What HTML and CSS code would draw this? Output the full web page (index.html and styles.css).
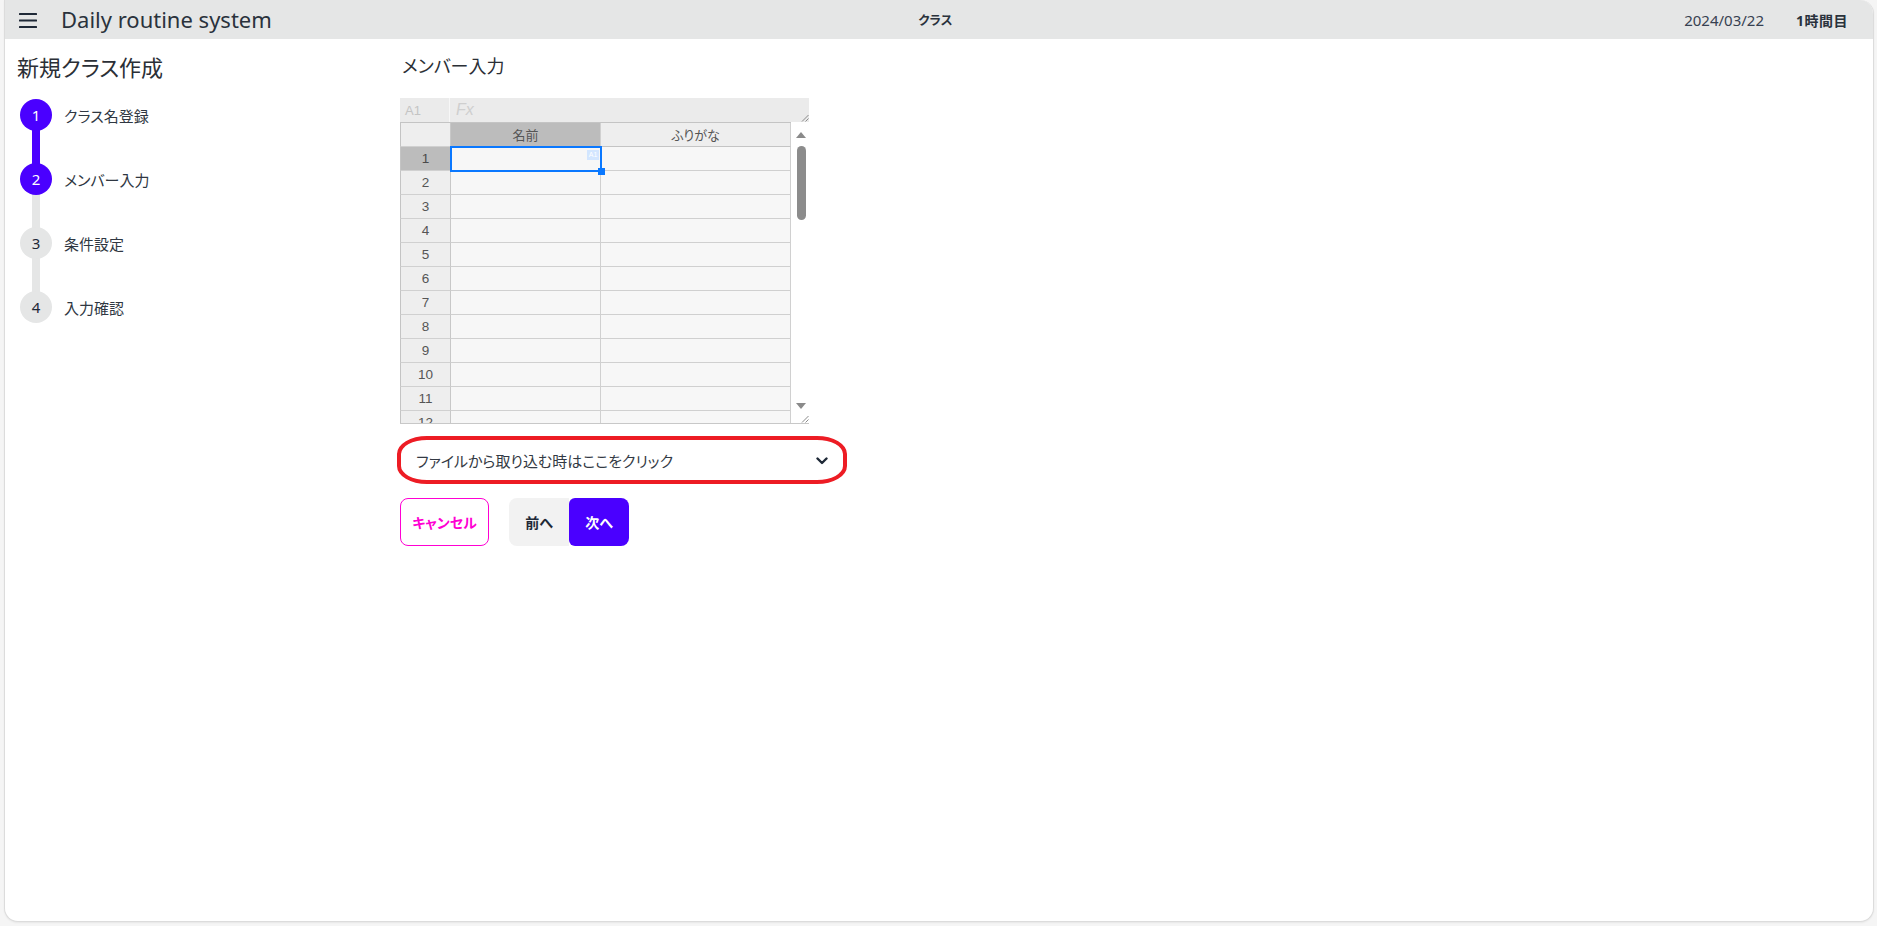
FILE: index.html
```html
<!DOCTYPE html>
<html lang="ja">
<head>
<meta charset="utf-8">
<title>Daily routine system</title>
<link rel="stylesheet" href="styles.css">
</head>
<body>
<div class="frame">
  <div class="card">
    <header class="topbar">
      <div class="tb-left">
        <span class="hamburger">
          <svg width="18" height="16" viewBox="0 0 18 16"><rect x="0" y="1" width="18" height="2" rx="0.5"/><rect x="0" y="7.5" width="18" height="2" rx="0.5"/><rect x="0" y="14" width="18" height="2" rx="0.5"/></svg>
        </span>
        <span class="brand">Daily routine system</span>
      </div>
      <div class="tb-center">クラス</div>
      <div class="tb-right">
        <span class="date">2024/03/22</span>
        <span class="period">1時間目</span>
      </div>
    </header>

    <div class="content">
      <aside class="sidebar">
        <h1 class="page-title">新規クラス作成</h1>
        <ul class="steps">
          <li class="step done line-done"><span class="dot">1</span><span class="label">クラス名登録</span></li>
          <li class="step done"><span class="dot">2</span><span class="label">メンバー入力</span></li>
          <li class="step"><span class="dot">3</span><span class="label">条件設定</span></li>
          <li class="step last"><span class="dot">4</span><span class="label">入力確認</span></li>
        </ul>
      </aside>

      <main class="main">
        <h2 class="section-title">メンバー入力</h2>

        <div class="sheet">
          <div class="fbar">
            <span class="addr">A1</span>
            <span class="fx">Fx</span>
            <svg class="grip" width="8" height="8" viewBox="0 0 8 8"><path d="M1 7.5 L7.5 1 M4.5 7.5 L7.5 4.5" stroke="#8a8a8a" stroke-width="1" fill="none"/></svg>
          </div>
          <div class="sheet-body">
            <div class="grid">
              <div class="cell corner"></div>
              <div class="cell colh selh">名前</div>
              <div class="cell colh">ふりがな</div>

              <div class="cell rowh selh">1</div><div class="cell"></div><div class="cell"></div>
              <div class="cell rowh">2</div><div class="cell"></div><div class="cell"></div>
              <div class="cell rowh">3</div><div class="cell"></div><div class="cell"></div>
              <div class="cell rowh">4</div><div class="cell"></div><div class="cell"></div>
              <div class="cell rowh">5</div><div class="cell"></div><div class="cell"></div>
              <div class="cell rowh">6</div><div class="cell"></div><div class="cell"></div>
              <div class="cell rowh">7</div><div class="cell"></div><div class="cell"></div>
              <div class="cell rowh">8</div><div class="cell"></div><div class="cell"></div>
              <div class="cell rowh">9</div><div class="cell"></div><div class="cell"></div>
              <div class="cell rowh">10</div><div class="cell"></div><div class="cell"></div>
              <div class="cell rowh">11</div><div class="cell"></div><div class="cell"></div>
              <div class="cell rowh">12</div><div class="cell"></div><div class="cell"></div>
            </div>
            <div class="vscroll">
              <span class="arr up"></span>
              <span class="thumb"></span>
              <span class="spacer"></span>
              <span class="arr down"></span>
            </div>
            <div class="selection"><span class="tag">A1</span><span class="fill-handle"></span></div>
            <svg class="grip grip-bottom" width="8" height="8" viewBox="0 0 8 8"><path d="M1 7.5 L7.5 1 M4.5 7.5 L7.5 4.5" stroke="#8a8a8a" stroke-width="1" fill="none"/></svg>
          </div>
        </div>

        <div class="collapse">
          <span class="collapse-title">ファイルから取り込む時はここをクリック</span>
          <svg class="chev" width="12" height="8" viewBox="0 0 12 8"><path d="M1.5 1.5 L6 6 L10.5 1.5" stroke="#1f2937" stroke-width="2.4" fill="none" stroke-linecap="round" stroke-linejoin="round"/></svg>
        </div>

        <div class="actions">
          <button class="btn btn-cancel">キャンセル</button>
          <div class="join">
            <button class="btn btn-prev">前へ</button>
            <button class="btn btn-next">次へ</button>
          </div>
        </div>
      </main>
    </div>
  </div>
</div>
</body>
</html>
```

FILE: styles.css
```css
* { box-sizing: border-box; }

html, body {
  margin: 0;
  padding: 0;
}

body {
  background: #f5f5f5;
  font-family: "Noto Sans", "Noto Sans CJK JP", sans-serif;
  color: #1f2937;
  font-feature-settings: "palt";
}

.frame {
  height: 926px;
  padding: 0 3px 4px 4px;
}

.card {
  height: 922px;
  background: #ffffff;
  border: 1px solid #dcdcdc;
  border-top: none;
  border-radius: 0 14px 14px 14px;
  overflow: hidden;
  box-shadow: 0 1px 2px rgba(0,0,0,0.06);
}

/* ---------- top bar ---------- */
.topbar {
  height: 39px;
  background: #e5e6e6;
  display: grid;
  grid-template-columns: 1fr auto 1fr;
  align-items: center;
  padding: 0 25px 0 14px;
}

.tb-left {
  display: flex;
  align-items: center;
  gap: 24px;
}

.hamburger {
  display: flex;
  width: 18px;
  height: 16px;
}
.hamburger svg { fill: #1f2937; }

.brand {
  font-size: 22px;
  line-height: 30px;
  color: #2a323c;
  margin-top: -2px;
}

.tb-center {
  font-size: 12.5px;
  font-weight: 700;
  color: #2a323c;
  margin-left: 4px;
}

.tb-right {
  display: flex;
  justify-content: flex-end;
  align-items: center;
  gap: 32px;
}

.date {
  font-size: 15px;
  color: #374151;
}

.period {
  font-size: 14px;
  font-weight: 700;
  color: #2a323c;
  letter-spacing: 0.5px;
}

/* ---------- content ---------- */
.content {
  display: grid;
  grid-template-columns: 395px 1fr;
  padding-top: 13px;
}

.sidebar {
  padding-left: 12px;
}

.page-title {
  margin: 0;
  font-size: 22px;
  line-height: 31px;
  font-weight: 400;
  color: #2b2f36;
}

.steps {
  list-style: none;
  margin: 0 0 0 3px;
  padding: 0;
}

.step {
  position: relative;
  height: 64px;
  display: flex;
  align-items: center;
  gap: 12px;
}

.step::after {
  content: "";
  position: absolute;
  left: 12px;
  top: 32px;
  width: 8px;
  height: 64px;
  background: #e5e6e6;
}
.step.line-done::after { background: #4a00ff; }
.step.last::after { display: none; }

.dot {
  position: relative;
  z-index: 1;
  width: 32px;
  height: 32px;
  border-radius: 50%;
  background: #e5e6e6;
  color: #1f2937;
  font-size: 15px;
  display: flex;
  align-items: center;
  justify-content: center;
}
.step.done .dot {
  background: #4a00ff;
  color: #ffffff;
}

.label {
  font-size: 15px;
  color: #2f3742;
}

/* ---------- main ---------- */
.main {
  padding: 0;
}

.section-title {
  margin: 0 0 18px 2px;
  font-size: 18px;
  line-height: 28px;
  font-weight: 400;
  color: #2b2f36;
}

/* spreadsheet */
.sheet {
  width: 409px;
  border-bottom: 1px solid #c8c8c8;
}

.fbar {
  position: relative;
  height: 24px;
  background: #ebebeb;
  display: flex;
  align-items: center;
}

.addr {
  width: 50px;
  height: 100%;
  display: flex;
  align-items: center;
  padding-left: 5px;
  border-right: 1px solid #f7f7f7;
  font-family: "Liberation Sans", Arial, sans-serif;
  font-size: 13px;
  color: #c4c4c4;
}

.fx {
  padding-left: 6px;
  font-family: "Liberation Sans", Arial, sans-serif;
  font-style: italic;
  font-size: 16px;
  color: #cfcfcf;
}

.grip {
  position: absolute;
  right: 0;
  bottom: 0;
}

.sheet-body {
  position: relative;
  height: 301px;
  overflow: hidden;
  display: flex;
  align-items: flex-start;
}

.grid {
  width: 391px;
  display: grid;
  grid-template-columns: 51px 150px 190px;
  grid-auto-rows: 24px;
  border-top: 1px solid #c4c4c4;
}

.cell {
  background: #f7f7f7;
  border-right: 1px solid #d0d0d0;
  border-bottom: 1px solid #d0d0d0;
  font-family: "Liberation Sans", "Noto Sans CJK JP", Arial, sans-serif;
  font-size: 13px;
  color: #555555;
  display: flex;
  align-items: center;
  justify-content: center;
}

.rowh, .corner {
  background: #eeeeee;
  border-left: 1px solid #c4c4c4;
  border-right-color: #c8c8c8;
  font-size: 13.5px;
}

.colh {
  background: #eeeeee;
  border-bottom-color: #c4c4c4;
}

.selh {
  background: #bcbcbc;
  color: #4a4a4a;
}

.colh.selh { color: #555; }

.vscroll {
  width: 18px;
  height: 301px;
  background: #ffffff;
  display: flex;
  flex-direction: column;
  align-items: center;
  padding: 10px 0 14px 2px;
}

.arr {
  width: 0;
  height: 0;
  border-left: 5px solid transparent;
  border-right: 5px solid transparent;
}
.arr.up { border-bottom: 6px solid #8a8a8a; }
.arr.down { border-top: 6px solid #8a8a8a; }

.thumb {
  margin-top: 8px;
  width: 9px;
  height: 74px;
  border-radius: 5px;
  background: #8c8c8c;
}

.spacer { flex: 1; }

.selection {
  position: absolute;
  left: 50px;
  top: 24px;
  width: 152px;
  height: 26px;
  border: 2px solid #0a78ff;
}

.tag {
  position: absolute;
  right: 1px;
  top: 2px;
  width: 12px;
  height: 10px;
  background: #d3e6ff;
  color: #ffffff;
  font-family: "Liberation Sans", Arial, sans-serif;
  font-size: 7px;
  line-height: 10px;
  text-align: center;
}

.fill-handle {
  position: absolute;
  right: -5px;
  bottom: -5px;
  width: 7px;
  height: 7px;
  background: #0a78ff;
}

.grip-bottom {
  position: absolute;
  right: 0;
  bottom: 0;
}

/* collapse */
.collapse {
  margin: 12px 0 0 -3px;
  width: 450px;
  height: 48px;
  border: 4px solid #ed1c24;
  border-radius: 30px / 18px;
  display: flex;
  align-items: center;
  justify-content: space-between;
  padding: 0 15px 0 15px;
}

.collapse-title {
  font-size: 15px;
  color: #333a44;
}

.chev { display: block; margin-top: 1px; }

/* buttons */
.actions {
  margin-top: 14px;
  display: flex;
  align-items: center;
  gap: 20px;
}

.join { display: flex; }

.btn {
  height: 48px;
  padding: 0 16px;
  font-family: "Noto Sans", "Noto Sans CJK JP", sans-serif;
  font-feature-settings: "palt";
  font-size: 14px;
  font-weight: 700;
  border: 1px solid transparent;
  border-radius: 8px;
  cursor: pointer;
}

.btn-cancel {
  width: 89px;
  padding: 0;
  background: #ffffff;
  border-color: #ff00d3;
  color: #ff00d3;
}

.btn-prev {
  width: 60px;
  padding: 0;
  background: #f2f2f2;
  color: #1f2937;
  border-radius: 8px 0 0 8px;
}

.btn-next {
  width: 60px;
  padding: 0;
  background: #4a00ff;
  color: #ffffff;
  border-radius: 6px 8px 8px 6px;
}
```
